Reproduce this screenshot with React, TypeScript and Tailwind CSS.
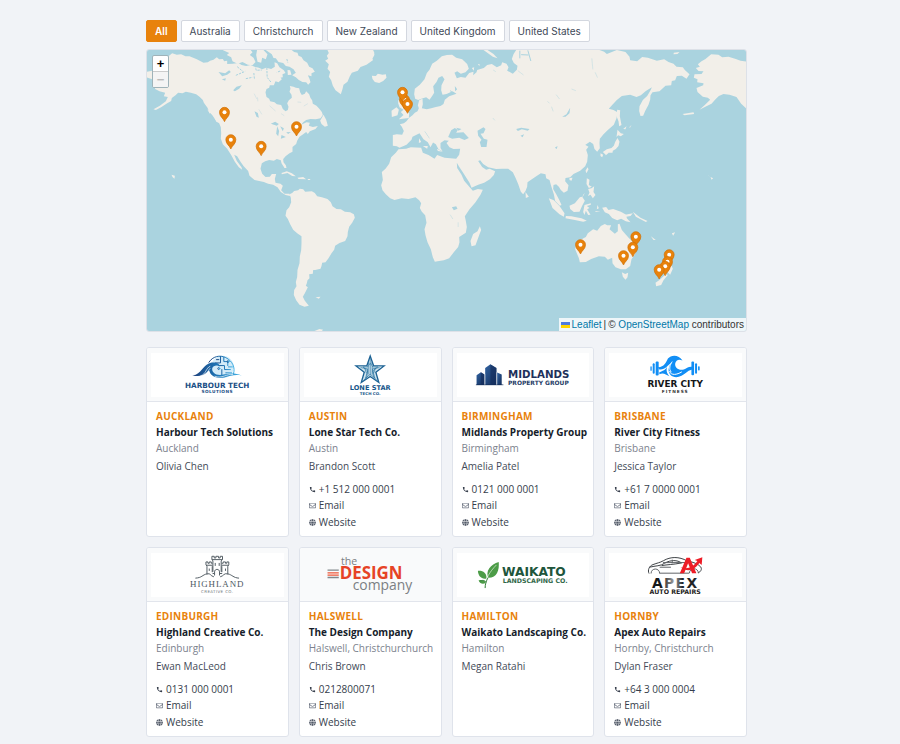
// =============================================
// Member Directory
// Region filter, map and member cards
// =============================================

import React, { useState } from 'react';
import { FaGlobe, FaRegEnvelope } from 'react-icons/fa';
import { MdCall } from 'react-icons/md';

// =============================================
// Types
// =============================================

interface Member {
  area: string;
  name: string;
  location: string;
  contact: string;
  phone?: string;
  logo: React.FC;
}

// =============================================
// Logos
// =============================================

const LogoFrame: React.FC<{ label: string; children: React.ReactNode }> = ({ label, children }) => (
  <svg viewBox="0 0 397 133" className="h-11 w-full" role="img" aria-label={label}>
    {children}
  </svg>
);

const HarbourLogo: React.FC = () => (
  <LogoFrame label="Harbour Tech Solutions">
    <defs>
      <linearGradient id="harbour" x1="0" x2="1" y1="0" y2="0">
        <stop offset="0" stopColor="#1d3f7a" />
        <stop offset="0.5" stopColor="#1d74b5" />
        <stop offset="1" stopColor="#45b3e6" />
      </linearGradient>
    </defs>
    <circle cx="214" cy="42" r="34" fill="#d3ebf8" />
    <g fill="none" stroke="url(#harbour)" strokeWidth="3" strokeLinecap="round">
      <path d="M173 28C184 10 206 5 224 14C244 24 254 45 247 63" />
      <path d="M208 11V30H193M218 13V26H230V38M202 38H220V50H238M244 42H232M212 50V66M224 60H242M196 20H203" strokeWidth="3" />
      <circle cx="231" cy="26" r="3" />
      <circle cx="203" cy="47" r="3" />
    </g>
    <path d="M122 67C148 70 155 33 181 29C198 26 205 34 207 41C198 35 186 37 183 46C181 57 192 69 213 66C232 63 247 58 272 68C249 64 239 70 219 74C194 79 177 69 174 53C164 57 157 77 122 67Z" fill="url(#harbour)" />
    <path d="M147 69C164 66 164 44 177 40M158 71C171 65 168 54 177 46M190 70C213 79 226 62 246 65" fill="none" stroke="#fff" strokeWidth="2" />
    <text x="198" y="105" textAnchor="middle" fill="#1c4f86" className="font-['DejaVu_Sans',sans-serif] text-[22px] font-bold">HARBOUR TECH</text>
    <text x="198" y="122" textAnchor="middle" fill="#1c4f86" className="font-['DejaVu_Sans',sans-serif] text-[13px] font-bold tracking-widest">SOLUTIONS</text>
  </LogoFrame>
);

const LoneStarLogo: React.FC = () => (
  <LogoFrame label="Lone Star Tech Co.">
    <path d="M198 9L208 38L240 39L215 58L224 89L198 71L171 89L180 58L155 39L188 38Z" fill="#cfe4ee" stroke="#1c6294" strokeWidth="4" />
    <g fill="none" stroke="#24719f" strokeWidth="2">
      <path d="M198 17V68M192 38V65M204 38V65M169 44L190 48L188 72L178 83M226 44L205 48L208 72L218 83M181 45L186 60M214 45L209 60M193 28V36M203 28V36" />
      <path d="M176 42H190L198 31L206 42H221L206 54L212 76L198 64L184 76L190 54Z" />
    </g>
    <text x="198" y="113" textAnchor="middle" fill="#17568a" className="font-['DejaVu_Sans',sans-serif] text-[20px] font-bold">LONE STAR</text>
    <text x="198" y="127" textAnchor="middle" fill="#17568a" className="font-['DejaVu_Sans',sans-serif] text-[12px] font-bold">TECH CO.</text>
  </LogoFrame>
);

const MidlandsLogo: React.FC = () => (
  <LogoFrame label="Midlands Property Group">
    <defs>
      <linearGradient id="midlands" x1="0" x2="1" y1="0" y2="1">
        <stop offset="0" stopColor="#3264a2" />
        <stop offset="1" stopColor="#122b58" />
      </linearGradient>
    </defs>
    <g fill="url(#midlands)">
      <path d="M57 67L70 58L81 65V97H57Z" />
      <path d="M83 45L99 34L117 45V97H83Z" />
      <path d="M119 59L133 65V97H119Z" />
    </g>
    <path d="M55 96H138" stroke="#102a56" strokeWidth="2" />
    <path d="M99 35L117 45V97H99ZM70 58L81 65V97H70Z" fill="#142d5b" fillOpacity="0.6" />
    <path d="M82 63V96M118 58V96" stroke="#e8eef6" strokeWidth="1.5" />
    <text x="152" y="75" fill="#1e315b" className="font-['DejaVu_Sans',sans-serif] text-[31px] font-bold">MIDLANDS</text>
    <text x="152" y="97" fill="#263c66" className="font-['DejaVu_Sans',sans-serif] text-[18px] font-bold">PROPERTY GROUP</text>
  </LogoFrame>
);

const RiverLogo: React.FC = () => (
  <LogoFrame label="River City Fitness">
    <g fill="#118ef5">
      <rect x="123" y="40" width="4" height="14" rx="2" />
      <rect x="130" y="31" width="6" height="32" rx="3" />
      <rect x="139" y="26" width="9" height="42" rx="3" />
      <rect x="247" y="26" width="8" height="41" rx="3" />
      <rect x="258" y="31" width="6" height="32" rx="3" />
      <rect x="267" y="40" width="5" height="13" rx="2" />
      <path d="M145 43C164 44 170 30 176 17C186 4 210 5 220 23C209 17 200 22 198 32C196 45 209 54 224 50C233 47 239 39 254 43V50C239 49 232 61 217 69C196 80 177 68 178 50C179 40 183 35 187 29C175 37 168 52 150 50Z" />
      <path d="M150 58C164 54 169 50 174 41C168 56 177 66 180 70C169 66 164 58 150 64Z" />
    </g>
    <path d="M180 55C186 69 203 66 218 57M189 26C182 36 178 48 186 58" fill="none" stroke="#fff" strokeWidth="3" />
    <text x="198" y="103" textAnchor="middle" fill="#151719" className="font-['DejaVu_Sans',sans-serif] text-[27px] font-bold">RIVER CITY</text>
    <text x="198" y="121" textAnchor="middle" fill="#333" className="font-['DejaVu_Sans',sans-serif] text-[13px] font-bold tracking-[3px]">FITNESS</text>
  </LogoFrame>
);

const HighlandLogo: React.FC = () => (
  <LogoFrame label="Highland Creative Co.">
    <g fill="none" stroke="#555f66" strokeWidth="3">
      <path d="M185 57V24L182 19V10H189V15H194V10H202V15H207V10H214V19L210 24V57" />
      <path d="M167 65V40L164 35V27H170V31H174V27H180V31H184M183 40V58M212 40V58M230 65V40L233 35V27H227V31H223V27H216V31H211" />
      <path d="M182 20H214M164 37H184M211 37H233M192 30V39M204 30V39M174 47V54M223 47V54M190 68V57C190 47 205 47 205 57V68" />
      <path d="M132 76C152 75 153 66 167 63C179 60 177 70 188 72M264 76C246 75 244 66 230 63C217 60 218 70 207 72M184 62H190M206 62H213" />
    </g>
    <text x="198" y="104" textAnchor="middle" fill="#4d585f" className="font-['Liberation_Serif',serif] text-[27px] tracking-widest">HIGHLAND</text>
    <text x="198" y="121" textAnchor="middle" fill="#6e7579" className="font-['DejaVu_Sans',sans-serif] text-[12px] tracking-widest">CREATIVE CO.</text>
  </LogoFrame>
);

const DesignLogo: React.FC = () => (
  <LogoFrame label="The Design Company">
    <text x="110" y="37" fill="#7b7f83" className="font-['Open_Sans',sans-serif] text-[32px]">the</text>
    <path d="M69 52H103M69 74H103" stroke="#81878c" strokeWidth="4" />
    <path d="M69 60H103M69 67H103" stroke="#ee5638" strokeWidth="4" />
    <text x="106" y="80" fill="#e64326" className="font-['Open_Sans',sans-serif] text-[51px] font-bold">DESIGN</text>
    <text x="145" y="111" fill="#7b7f83" className="font-['Open_Sans',sans-serif] text-[42px]">company</text>
  </LogoFrame>
);

const WaikatoLogo: React.FC = () => (
  <LogoFrame label="Waikato Landscaping Co.">
    <g fill="#4c9c47">
      <path d="M124 27C126 52 119 74 93 75C82 55 100 34 124 27Z" />
      <path d="M61 54C75 52 88 60 87 77C72 80 62 71 61 54Z" />
      <path d="M63 83C73 80 81 83 86 89C77 96 68 93 63 83Z" />
    </g>
    <path d="M81 106C84 77 96 58 117 36" fill="none" stroke="#e2f0df" strokeWidth="2" />
    <path d="M83 106C83 94 86 85 92 74M86 89C80 80 73 83 68 85" fill="none" stroke="#388340" strokeWidth="3" />
    <text x="134" y="70" fill="#20553b" className="font-['DejaVu_Sans',sans-serif] text-[37px] font-bold">WAIKATO</text>
    <text x="136" y="92" fill="#326849" className="font-['DejaVu_Sans',sans-serif] text-[19px] font-bold">LANDSCAPING CO.</text>
  </LogoFrame>
);

const ApexLogo: React.FC = () => (
  <LogoFrame label="Apex Auto Repairs">
    <defs>
      <linearGradient id="apex" x1="0" x2="1" y1="0" y2="0">
        <stop offset="0.2" stopColor="#16181a" />
        <stop offset="0.48" stopColor="#a1a3a5" />
        <stop offset="0.66" stopColor="#222426" />
      </linearGradient>
    </defs>
    <path d="M119 62C114 53 119 39 131 35C144 30 150 30 163 23C183 11 210 10 234 24C252 27 267 33 275 42C280 49 275 57 267 60M120 43C140 38 153 40 166 31C184 20 205 21 217 30C193 35 174 35 157 38" fill="none" stroke="#3c4145" strokeWidth="3" />
    <path d="M125 62C125 44 151 44 151 62M241 61C241 43 268 43 268 61M151 61H240M161 29H230M189 20V31M151 43H185" fill="none" stroke="#606468" strokeWidth="3" />
    <path d="M212 61L232 14H242L262 61H249L237 31L225 61Z" fill="#ed1d27" />
    <path d="M214 43C235 50 250 44 265 24L257 21L280 13L278 36L271 30C254 53 236 59 214 43Z" fill="#ed1d27" />
    <text x="198" y="105" textAnchor="middle" fill="url(#apex)" className="font-['DejaVu_Sans',sans-serif] text-[42px] font-bold tracking-widest">APEX</text>
    <text x="198" y="124" textAnchor="middle" fill="#222" className="font-['DejaVu_Sans',sans-serif] text-[19px] font-bold">AUTO REPAIRS</text>
  </LogoFrame>
);

// =============================================
// Data
// =============================================

const REGIONS = ['All', 'Australia', 'Christchurch', 'New Zealand', 'United Kingdom', 'United States'];

const MEMBERS: Member[] = [
  { area: 'Auckland', name: 'Harbour Tech Solutions', location: 'Auckland', contact: 'Olivia Chen', logo: HarbourLogo },
  { area: 'Austin', name: 'Lone Star Tech Co.', location: 'Austin', contact: 'Brandon Scott', phone: '+1 512 000 0001', logo: LoneStarLogo },
  { area: 'Birmingham', name: 'Midlands Property Group', location: 'Birmingham', contact: 'Amelia Patel', phone: '0121 000 0001', logo: MidlandsLogo },
  { area: 'Brisbane', name: 'River City Fitness', location: 'Brisbane', contact: 'Jessica Taylor', phone: '+61 7 0000 0001', logo: RiverLogo },
  { area: 'Edinburgh', name: 'Highland Creative Co.', location: 'Edinburgh', contact: 'Ewan MacLeod', phone: '0131 000 0001', logo: HighlandLogo },
  { area: 'Halswell', name: 'The Design Company', location: 'Halswell, Christchurchurch', contact: 'Chris Brown', phone: '0212800071', logo: DesignLogo },
  { area: 'Hamilton', name: 'Waikato Landscaping Co.', location: 'Hamilton', contact: 'Megan Ratahi', logo: WaikatoLogo },
  { area: 'Hornby', name: 'Apex Auto Repairs', location: 'Hornby, Christchurch', contact: 'Dylan Fraser', phone: '+64 3 000 0004', logo: ApexLogo },
];

// Pin positions in map units, later ones lie on top
const PINS = [
  [234, 187], [253, 269], [450, 230], [344, 289],
  [774, 149], [768, 127], [783, 162],
  [1302, 584], [1468, 560], [1459, 592], [1431, 617],
  [1568, 614], [1563, 635], [1556, 649], [1538, 659],
];

// =============================================
// Map
// =============================================

const WorldMap: React.FC = () => (
  <svg viewBox="0 0 1800 843" preserveAspectRatio="xMidYMid slice" className="block h-[281px] w-full bg-[#aad3df]" role="img" aria-label="Map of member locations">
    {/* Americas and Greenland */}
    <g transform="translate(-21 -30)" fill="#f2efe9">
      <path d="M20 96L38 92L45 100L38 118L20 112Z" />
      <path d="M72 52L88 48L98 40L112 44L125 43L138 49L150 49L172 58L192 68L205 67L212 62L222 59L232 52L239 58L250 57L254 64L263 62L263 72L280 71L297 69L306 75L320 78L333 75L345 80L358 83L368 88L380 83L395 87L406 80L405 67L413 70L420 82L433 91L438 99L429 103L430 112L422 113L418 122L408 124L403 136L391 136L389 143L381 147L378 157L381 171L389 176L392 184L405 187L412 193L425 195L430 207L438 214L445 210L447 200L443 190L448 181L457 173L456 164L450 155L453 146L451 138L462 140L469 143L479 145L482 157L487 165L496 161L500 154L509 163L513 174L518 181L520 191L531 197L540 207L547 216L550 225L543 235L529 238L513 237L500 240L491 247L485 254L501 247L511 248L508 257L520 261L535 258L528 267L511 274L505 282L500 276L492 282L480 290L473 302L470 312L459 321L459 335L450 340L439 348L431 357L432 367L439 376L441 384L435 384L426 370L424 361L412 357L403 362L389 360L377 364L367 370L363 386L368 401L378 411L391 410L397 402L410 402L406 417L408 428L423 431L430 437L425 451L435 461L450 461L452 468L438 465L424 456L414 442L401 434L386 431L373 426L345 420L330 407L326 393L312 378L303 365L293 349L284 344L292 363L306 382L308 389L298 382L286 365L275 345L263 326L250 313L244 296L245 280L244 262L239 250L230 242L218 225L209 216L204 203L193 188L190 180L180 170L170 163L154 158L139 155L129 160L116 158L108 166L97 174L95 183L83 190L66 201L49 210L42 208L61 197L79 184L85 171L73 169L77 158L60 154L47 147L44 137L51 129L63 126L60 114L47 112L46 104L61 97L65 89L51 86L43 79L60 70Z" />
      <path d="M245 28H332L339 37L331 45L342 53L348 66L339 76L325 74L309 66L294 71L279 64L275 52L262 45L269 39Z" />
      <path d="M353 28H370L384 43L379 58L368 53L365 68L354 65L350 45Z" />
      <path d="M376 28H454L464 36L474 38L477 47L486 51L492 61L503 68L509 80L519 85L526 95L516 100L516 109L505 106L510 116L513 127L506 134L500 127L489 126L478 120L469 112L458 106L469 98L462 88L450 80L439 78L431 69L417 66L409 55L402 54L397 43Z" />
      <path d="M405 114L418 105L427 118L417 127L405 122ZM444 90L452 91L456 104L445 105Z" />
      <path d="M546 252L542 242L552 224L560 239L565 257L556 260Z" />
      <path d="M563 28L568 39L562 47L566 56L557 62L568 73L564 86L572 96L568 110L575 121L580 137L588 151L604 163L609 147L612 134L624 125L631 109L637 98L655 92L663 81L681 74L701 60L694 51L705 40L700 28Z" />
      <path d="M697 107L709 108L715 101L729 104L739 103L741 113L731 123L719 129L706 126L699 117Z" />
      <path d="M426 399L442 394L457 400L469 409L458 408L444 399L427 403ZM474 413L491 411L500 418L477 417ZM505 417H512V420H505Z" />
      <path d="M96 404L106 407L105 416L99 411ZM203 208L213 216L211 221ZM224 232L240 248L231 246Z" />
      <g transform="translate(0 420)">
        <path d="M450 43L458 39L464 33L476 31L481 26L491 28L497 35L517 34L526 39L533 49L547 52L564 57L574 67L579 79L591 87L604 88L616 95L632 97L643 103L646 113L638 128L629 140L625 156L624 169L617 183L600 189L587 197L584 209L576 220L567 235L558 247L548 248L546 258L543 266L527 270L521 270L520 281L509 283L510 295L504 301L502 310L499 317L505 322L496 340L490 350L496 362L508 377L495 380L480 374L470 361L463 345L464 330L471 319L469 306L473 291L474 270L480 250L481 229L485 211L486 190L486 169L473 160L461 149L452 133L445 117L438 107L441 91L449 82L455 67L454 53Z" />
        <path d="M528 352L543 350L538 356ZM525 453L540 447L551 449L545 455Z" />
      </g>
      {/* Lakes and arctic channels */}
      <g fill="#aad3df">
        <path d="M237 96L257 100L269 91L274 96L263 104L248 109ZM247 118L259 115L257 122ZM281 151L291 140L307 136L299 146L286 154ZM345 214L355 219L358 233L351 230ZM394 251L407 245L418 252L412 257ZM413 259L419 273L416 289L410 281ZM422 259L433 265L430 274ZM426 285L439 291L424 296ZM440 277L454 276L446 282Z" />
        <path d="M293 80L310 94M347 75L350 91L367 90M382 83L383 112L394 126M289 106L317 94M319 116L339 112M343 99L345 119M442 57L445 68M374 58L380 77M422 93L412 97" stroke="#aad3df" strokeWidth="3" strokeDasharray="7 3" fill="none" />
        <path d="M354 172L355 184M358 208L367 223M344 161L352 177M390 197L408 213M425 221L434 227M474 186L485 187M493 198L505 191" stroke="#aad3df" strokeWidth="2" strokeOpacity="0.5" fill="none" />
      </g>
    </g>

    {/* Europe, Africa and Asia */}
    <g transform="translate(669 -15)" fill="#f2efe9">
      <path d="M70 270L82 268L98 269L103 258L97 245L91 238L103 235L111 229L119 218L129 211L136 203L144 199L148 190L145 181L149 166L159 161L160 178L157 190L172 193L185 190L199 186L213 183L222 177L226 164L239 154L261 146L249 139L231 147L219 149L215 136L216 121L225 103L218 93L207 98L201 111L191 124L194 143L188 153L180 164L170 157L160 160L146 165L137 161L134 148L136 131L151 119L165 103L172 84L180 74L188 56L202 47L217 34L232 30L248 29L260 38L278 43L293 57L298 71L288 82L274 86L263 79L255 83L262 100L274 96L288 98L299 84L312 80L311 91L321 82L323 75L343 69L353 60L367 57L382 67L395 61L398 52L411 56L417 67L413 77L430 86L442 74L444 62L433 54L427 42L432 28L440 15H690L704 20L712 27L727 21L742 15L768 21L780 35L782 46L803 49L818 36L835 38L862 47L884 43L897 51L912 56L921 65L940 67L946 75L960 88L951 101L937 92L922 93L917 106L907 108L905 121L888 122L870 139L849 142L843 151L842 164L837 179L827 198L821 212L813 213L809 198L810 184L820 165L833 153L844 134L847 127L829 138L814 151L801 156L782 149L757 153L742 165L728 180L718 191L732 195L744 202L741 220L733 239L715 255L702 268L691 281L690 295L691 310L683 320L675 312L671 297L661 290L647 300L637 295L641 286L648 300L657 305L650 314L655 330L653 350L647 364L632 377L612 387L602 397L588 399L587 409L597 421L594 437L583 443L574 435L568 425L560 418L552 420L551 432L561 449L569 464L576 480L571 482L557 468L553 448L545 423L540 405L530 400L528 388L514 385L498 395L487 403L474 412L473 425L468 438L461 448L454 440L446 417L438 398L430 382L416 371L397 371L380 372L356 367L341 357L332 346L326 348L338 366L350 374L360 371L377 379L373 390L361 403L344 413L326 419L306 428L300 413L289 396L279 380L268 364L262 353L263 369L276 389L284 407L300 426L310 437L325 432L340 434L333 449L318 472L300 493L286 514L289 528L292 546L289 563L269 576L270 592L266 606L254 620L239 640L223 646L204 649L196 650L190 637L184 613L174 592L168 571L165 553L171 533L167 511L157 500L151 489L155 475L149 466L138 457L117 462L96 460L75 465L62 460L49 448L39 436L35 421L40 405L37 381L48 371L59 356L65 337L79 323L87 313L110 311L124 307L155 308L160 323L177 330L195 341L203 330L225 338L260 341L269 329L272 311L252 312L240 307L231 294L238 287L225 286L213 294L213 309L219 319L207 313L199 298L187 290L168 261L164 257L178 278L191 292L183 307L175 292L162 283L150 265L129 275L126 284L111 299L90 308L82 304L70 302Z" />
      <path d="M66 197L81 187L88 194L84 211L67 216ZM86 165L98 171L105 190L119 205L118 219L88 223L102 210L94 201L102 194L90 187L86 175ZM103 152L107 156L104 160Z" />
      <path d="M331 544L335 555L330 568L318 601L306 604L303 588L311 567L324 559ZM468 441L478 455L469 459ZM202 311L220 320L205 318ZM160 303L175 303L173 311ZM149 280L155 291L148 294Z" />
      <path d="M342 15H354L372 27L384 40L370 35ZM307 69L314 67L313 77ZM325 58L330 57L330 63ZM0 15H9L15 29L8 43L0 48Z" />
      {/* Inland seas and lakes */}
      <g fill="#aad3df">
        <path d="M236 276L245 256L256 249L265 255L260 263L282 262L298 279L285 285L269 278L248 281ZM260 248L276 252L267 257ZM324 257L342 247L348 252L342 265L333 266L343 281L354 284L351 306L335 306L331 292L336 284L326 272ZM247 487L260 484L264 491L253 496ZM198 119L202 123L197 131ZM242 134L248 141L245 147ZM256 123L263 133L257 139Z" />
        <path d="M440 252L455 248L480 252L475 257L457 253L445 258ZM578 215L591 208L602 188L600 205L588 215ZM453 272L464 268L459 277ZM556 308L564 303L562 312Z" />
        <path d="M455 29L477 30M475 16L484 48M451 17L451 40" stroke="#aad3df" strokeWidth="3" fill="none" />
        <path d="M242 509L250 522M266 532L266 546M445 77L462 90M546 185L551 199M667 40L670 73M677 82L684 98M371 75L379 80M370 219L376 226M560 149L570 162M534 169L540 175M606 132L619 137" stroke="#aad3df" strokeWidth="2" strokeOpacity="0.6" fill="none" />
      </g>
    </g>

    {/* Pacific and Oceania */}
    <g transform="translate(1209 -15)" fill="#f2efe9">
      <path d="M-2 460L13 466L30 483L45 505L43 515L30 508L9 489ZM49 513L66 514L80 517L96 520L112 527L101 530L76 525L48 520ZM60 482L76 475L91 457L98 455L106 467L98 482L90 500L73 501L62 492ZM105 480L124 475L124 479L112 483L120 489L113 493L123 509L116 510L109 497L105 510L101 501Z" />
      <path d="M112 400L120 404L118 420L127 425L118 429L111 417ZM116 432L126 430L134 424L132 441L138 450L130 460L123 449L115 453L120 443ZM106 444L98 458L101 449ZM114 367L117 373L111 385L108 377ZM60 399L69 398L66 407L60 405Z" />
      <path d="M158 488L170 486L177 495L191 492L214 500L230 509L232 520L243 532L229 529L215 521L203 526L188 519L178 507L166 502ZM144 480L148 490L142 493ZM137 498L153 501L139 501ZM227 509L250 505L243 513L230 515ZM250 500L273 518L294 528L289 531L259 515ZM304 574L319 585L312 585ZM367 565L377 562L371 572Z" />
      <path d="M203 194L212 196L211 214L216 240L209 244L207 229L201 214ZM204 254L214 265L223 267L214 274L206 271L201 276ZM204 279L210 290L207 303L199 312L190 317L189 323L178 323L166 327L160 321L172 313L186 309L193 302L197 291ZM153 325L161 329L158 337L153 333ZM165 324L177 324L169 331Z" />
      <path d="M87 588L109 576L115 565L131 553L143 557L154 543L166 537L173 541L185 541L180 553L196 566L205 559L205 538L210 536L217 555L228 568L238 579L251 592L261 607L258 625L246 643L242 663L229 673L214 673L198 667L189 655L188 638L175 644L166 635L148 634L125 642L109 651L91 652L88 639L77 613L79 598ZM217 682L227 687L236 683L234 697L228 704L220 695Z" />
      <path d="M350 636L361 652L370 671L362 689L354 682ZM349 687L355 690L342 706L335 720L320 724L318 713L331 704L343 693Z" />
      <path d="M439 69L451 65L445 58L456 49L468 42L485 28L507 29L518 37L537 35L559 42L573 47L591 50V191L575 176L561 156L540 149L522 147L508 153L498 163L486 176L466 186L450 194L466 180L482 164L475 158L460 155L444 141L441 129L461 121L462 115L443 112L444 103L433 98L435 88L456 87L462 79L447 78ZM399 207L432 202L434 207L405 211ZM392 215H397M474 389L483 397L477 392ZM483 396L491 400L486 404ZM373 23L390 21L384 27L372 28ZM221 252L231 244L228 253ZM240 246L246 240L241 249Z" />
    </g>

    {/* Pins */}
    {PINS.map(([x, y]) => (
      <g key={`${x}-${y}`} transform={`translate(${x} ${y})`}>
        <path d="M0 28C-4 17-15 13-15 0A15 15 0 1 1 15 0C15 13 4 17 0 28Z" fill="#e8820c" stroke="#cf7005" strokeWidth="2" />
        <circle r="6" fill="#fff" />
      </g>
    ))}
  </svg>
);

// =============================================
// Member card
// =============================================

const MemberCard: React.FC<{ member: Member }> = ({ member }) => {
  const Logo = member.logo;

  return (
    <article className="min-h-[190px] overflow-hidden rounded-[3px] border border-[#dfe3eb] bg-white">
      <div className="border-b border-[#e2e5ec] bg-[#f9fafb] px-1 pt-[5px] pb-1">
        <div className={member.area === 'Halswell' ? '' : 'bg-white'}>
          <Logo />
        </div>
      </div>
      <div className="px-[9px] pt-1.5 text-[10px] leading-4">
        <p className="font-bold tracking-wide text-[#e8820c] uppercase">{member.area}</p>
        <h2 className="font-bold whitespace-nowrap text-[#161d2b]">{member.name}</h2>
        <p className="whitespace-nowrap text-[#7c828e]">{member.location}</p>
        <p className="mt-0.5 text-[#434a58]">{member.contact}</p>
        {member.phone && (
          <ul className="mt-[7px] text-[#353d4b]">
            <li>
              <a href={`tel:${member.phone.replace(/ /g, '')}`} className="flex items-center gap-[3px]">
                <MdCall size={7} />
                {member.phone}
              </a>
            </li>
            <li>
              <a href="#email" className="flex items-center gap-[3px] leading-[17px]">
                <FaRegEnvelope size={7} className="text-[#6b7280]" />
                Email
              </a>
            </li>
            <li>
              <a href="#website" className="flex items-center gap-[3px]">
                <FaGlobe size={7} className="text-[#555d6b]" />
                Website
              </a>
            </li>
          </ul>
        )}
      </div>
    </article>
  );
};

// =============================================
// Page
// =============================================

const App: React.FC = () => {
  const [region, setRegion] = useState('All');

  return (
    <div className="min-h-screen bg-[#f1f3f7] pt-5 pr-[7px] pb-1.5 font-['Open_Sans',sans-serif]">
      <main className="mx-auto max-w-[601px]">
        {/* Region filter */}
        <div className="flex flex-wrap gap-1 font-['Inter',sans-serif] text-[10px] leading-5">
          {REGIONS.map((name) => (
            <button
              key={name}
              type="button"
              onClick={() => setRegion(name)}
              className={`rounded-[2px] border px-2 ${
                region === name
                  ? 'border-[#e8820c] bg-[#e8820c] font-semibold text-white'
                  : 'border-[#d3d7df] bg-white text-[#414958]'
              }`}
            >
              {name}
            </button>
          ))}
        </div>

        {/* Map */}
        <section className="relative mt-[7px] overflow-hidden rounded-[3px] border border-[#dde1e8]">
          <WorldMap />
          <div className="absolute top-[5px] left-[5px] w-[17px] overflow-hidden rounded-[2px] border border-[#9fb3b9] bg-white text-center font-['Liberation_Sans',sans-serif] text-[13px] leading-[15px] font-bold">
            <button type="button" aria-label="Zoom in" className="block w-full border-b border-[#ccc] text-black">+</button>
            <button type="button" aria-label="Zoom out" disabled className="block w-full bg-[#f4f4f4] text-[#bbb]">−</button>
          </div>
          <div className="absolute right-0 bottom-0 flex items-center gap-0.5 bg-white/80 px-0.5 font-['Liberation_Sans',sans-serif] text-[10px] leading-[13px] text-[#333]">
            <a href="https://leafletjs.com" className="flex items-center gap-0.5 text-[#0078a8]">
              <svg viewBox="0 0 9 6" className="h-1.5 w-[9px]">
                <path fill="#4c7be1" d="M0 0h9v3H0z" />
                <path fill="#ffd500" d="M0 3h9v3H0z" />
              </svg>
              Leaflet
            </a>
            <span>|</span>
            <span>
              © <a href="https://www.openstreetmap.org/copyright" className="text-[#0078a8]">OpenStreetMap</a> contributors
            </span>
          </div>
        </section>

        {/* Members */}
        <section className="mt-[15px] grid grid-cols-2 gap-2.5 sm:grid-cols-4">
          {MEMBERS.map((member) => (
            <MemberCard key={member.area} member={member} />
          ))}
        </section>
      </main>
    </div>
  );
};

export default App;
